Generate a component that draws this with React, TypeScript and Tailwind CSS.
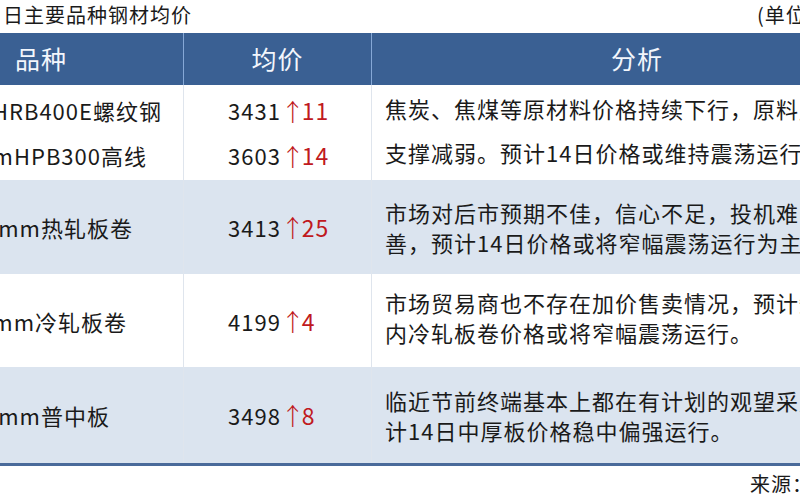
import React from "react";

type Row = {
  items: { text: string; pr: string }[];
  prices: { price: string; change: string }[];
  lines: string[];
  bg: string;
  h: string;
  lead: string;
  aPad: string;
  itemLead: string;
};

const rows: Row[] = [
  {
    items: [
      { text: "Φ20mmHRB400E螺纹钢", pr: "pr-[21px]" },
      { text: "Φ6.5mmHPB300高线", pr: "pr-[36px]" },
    ],
    prices: [
      { price: "3431", change: "11" },
      { price: "3603", change: "14" },
    ],
    lines: ["焦炭、焦煤等原材料价格持续下行，原料成本", "支撑减弱。预计14日价格或维持震荡运行。"],
    bg: "bg-white",
    h: "h-[95px]",
    lead: "leading-[44px]",
    aPad: "pb-[6px]",
    itemLead: "leading-[45px]",
  },
  {
    items: [{ text: "5.75mm热轧板卷", pr: "pr-[50px]" }],
    prices: [{ price: "3413", change: "25" }],
    lines: ["市场对后市预期不佳，信心不足，投机难以改", "善，预计14日价格或将窄幅震荡运行为主。"],
    bg: "bg-[#dbe4ef]",
    h: "h-[94px]",
    lead: "leading-[30px]",
    aPad: "pb-[0px]",
    itemLead: "leading-[30px]",
  },
  {
    items: [{ text: "1.0mm冷轧板卷", pr: "pr-[56px]" }],
    prices: [{ price: "4199", change: "4" }],
    lines: ["市场贸易商也不存在加价售卖情况，预计短期", "内冷轧板卷价格或将窄幅震荡运行。"],
    bg: "bg-white",
    h: "h-[93px]",
    lead: "leading-[30px]",
    aPad: "pb-[7px]",
    itemLead: "leading-[30px]",
  },
  {
    items: [{ text: "20mm普中板", pr: "pr-[73px]" }],
    prices: [{ price: "3498", change: "8" }],
    lines: ["临近节前终端基本上都在有计划的观望采购，预", "计14日中厚板价格稳中偏强运行。"],
    bg: "bg-[#dbe4ef]",
    h: "h-[96px]",
    lead: "leading-[30px]",
    aPad: "pb-[0px]",
    itemLead: "leading-[30px]",
  },
];

export default function App() {
  return (
    <div className="w-[800px] h-[500px] overflow-hidden bg-white text-[#1a1a1a] font-['Noto_Sans_CJK_SC','Noto_Sans',sans-serif]">
      {/* title */}
      <div className="grid grid-cols-[757px_200px] h-[33px] items-center pb-[3px] text-[20px] tracking-[1px] whitespace-nowrap">
        <span className="pl-[3px]">日主要品种钢材均价</span>
        <span>(单位：元/吨)</span>
      </div>

      <div className="w-[902px]">
        {/* header */}
        <div className="grid grid-cols-[184px_188px_530px] h-[52px] bg-[#3a6093] text-[#f2f6fc] text-[25px] tracking-[1px]">
          <div className="flex items-center pl-[15px] border-r border-[#86a8d6]">品种</div>
          <div className="flex items-center justify-center border-r border-[#86a8d6]">均价</div>
          <div className="flex items-center justify-center">分析</div>
        </div>

        {rows.map((r, i) => (
          <div key={i} className={`grid grid-cols-[184px_188px_530px] ${r.h} ${r.bg} text-[22px] tracking-[1px]`}>
            <div className="flex flex-col justify-center border-r border-[#dfe5ed] overflow-hidden">
              {r.items.map((it, j) => (
                <div key={j} className={`flex justify-end whitespace-nowrap ${it.pr} ${r.itemLead}`}>
                  <span>{it.text}</span>
                </div>
              ))}
            </div>
            <div className="flex flex-col justify-center border-r border-[#dfe5ed] pl-[44px]">
              {r.prices.map((p, j) => (
                <div key={j} className={`flex items-center whitespace-nowrap ${r.itemLead}`}>
                  <span>{p.price}</span>
                  <span className="inline-block w-[21px] text-center text-[#c01920] text-[24px] font-light tracking-normal">↑</span>
                  <span className="text-[#c01920] text-[23px]">{p.change}</span>
                </div>
              ))}
            </div>
            <div className={`flex flex-col justify-center pl-[13px] ${r.aPad} ${r.lead} whitespace-nowrap`}>
              {r.lines.map((l, j) => (
                <div key={j}>{l}</div>
              ))}
            </div>
          </div>
        ))}
        <div className="h-[3px] bg-[#4a6a9a]"></div>
      </div>

      <div className="pl-[750px] pt-[4px] text-[20px] tracking-[1px] whitespace-nowrap leading-[28px]">来源：我的钢铁网</div>
    </div>
  );
}
